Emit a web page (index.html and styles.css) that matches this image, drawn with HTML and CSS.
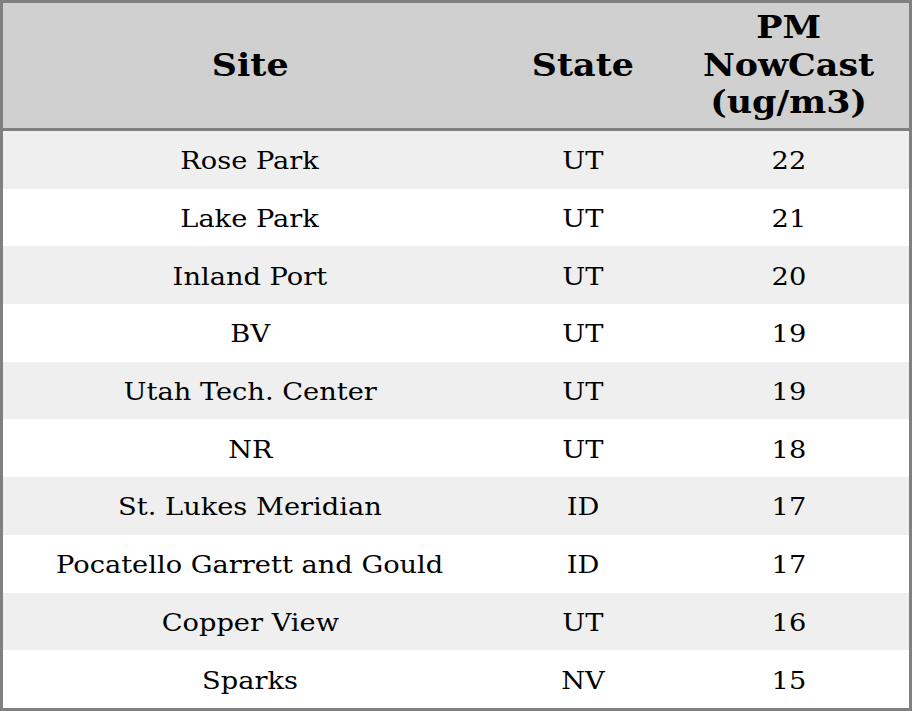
FILE: index.html
```html
<!DOCTYPE html>
<html>
<head>
<meta charset="utf-8">
<link rel="stylesheet" href="styles.css">
</head>
<body>
<table class="aq-table">
  <colgroup>
    <col class="col-site">
    <col class="col-state">
    <col class="col-pm">
  </colgroup>
  <thead>
    <tr>
      <th><span class="txt">Site</span></th>
      <th><span class="txt">State</span></th>
      <th><span class="txt">PM<br>NowCast<br>(ug/m3)</span></th>
    </tr>
  </thead>
  <tbody>
    <tr><td><span class="txt">Rose Park</span></td><td><span class="txt">UT</span></td><td><span class="txt">22</span></td></tr>
    <tr><td><span class="txt">Lake Park</span></td><td><span class="txt">UT</span></td><td><span class="txt">21</span></td></tr>
    <tr><td><span class="txt">Inland Port</span></td><td><span class="txt">UT</span></td><td><span class="txt">20</span></td></tr>
    <tr><td><span class="txt">BV</span></td><td><span class="txt">UT</span></td><td><span class="txt">19</span></td></tr>
    <tr><td><span class="txt">Utah Tech. Center</span></td><td><span class="txt">UT</span></td><td><span class="txt">19</span></td></tr>
    <tr><td><span class="txt">NR</span></td><td><span class="txt">UT</span></td><td><span class="txt">18</span></td></tr>
    <tr><td><span class="txt">St. Lukes Meridian</span></td><td><span class="txt">ID</span></td><td><span class="txt">17</span></td></tr>
    <tr><td><span class="txt">Pocatello Garrett and Gould</span></td><td><span class="txt">ID</span></td><td><span class="txt">17</span></td></tr>
    <tr><td><span class="txt">Copper View</span></td><td><span class="txt">UT</span></td><td><span class="txt">16</span></td></tr>
    <tr><td><span class="txt">Sparks</span></td><td><span class="txt">NV</span></td><td><span class="txt">15</span></td></tr>
  </tbody>
</table>
</body>
</html>
```

FILE: styles.css
```css
html, body {
  margin: 0;
  padding: 0;
  background: #ffffff;
}

.aq-table {
  width: 912px;
  height: 711px;
  border-collapse: separate;
  border-spacing: 0;
  border: 3px solid #808080;
  table-layout: fixed;
  font-family: "DejaVu Serif", serif;
  color: #000;
}

.col-site { width: 494px; }
.col-state { width: 172px; }
.col-pm { width: 240px; }

.txt {
  display: inline-block;
  transform: scaleX(1.09);
}

.aq-table th {
  background: #d0d0d0;
  font-size: 32px;
  line-height: 37.5px;
  font-weight: bold;
  height: 125px;
  padding: 0;
  text-align: center;
  vertical-align: middle;
  border-bottom: 3px solid #808080;
}

.aq-table td {
  font-size: 25px;
  height: 57.7px;
  padding: 2px 0 0;
  box-sizing: border-box;
  text-align: center;
  vertical-align: middle;
}

.aq-table tbody tr:nth-child(odd) td {
  background: #efefef;
}
```
